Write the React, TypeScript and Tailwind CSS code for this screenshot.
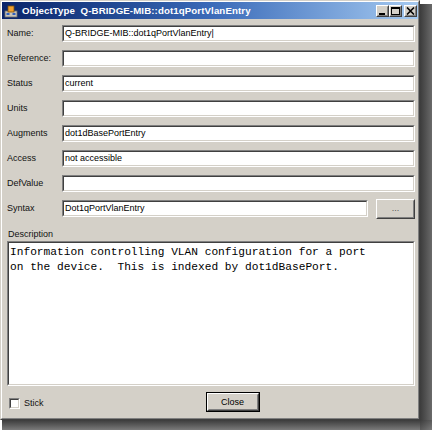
import React from "react";

const sunkenOuter =
  "border border-t-[#808080] border-l-[#808080] border-b-white border-r-white";
const sunkenInner =
  "border border-t-[#404040] border-l-[#404040] border-b-[#d4d0c8] border-r-[#d4d0c8]";
const raisedOuter =
  "border border-t-white border-l-white border-b-[#404040] border-r-[#404040]";
const raisedInner =
  "border border-t-[#d4d0c8] border-l-[#d4d0c8] border-b-[#808080] border-r-[#808080]";

function Field({ value = "" }: { value?: string }) {
  return (
    <div className={`${sunkenOuter} flex-1 h-[17px]`}>
      <div className={`${sunkenInner} h-full bg-white pl-[1px] flex items-center text-[9px] leading-none text-black whitespace-nowrap overflow-hidden`}>
        {value}
      </div>
    </div>
  );
}

function Row({ label, value, children }: { label: string; value?: string; children?: React.ReactNode }) {
  return (
    <div className="flex items-center h-[17px]">
      <div className="w-[55px] text-[9px] leading-none text-[#111]">{label}</div>
      <Field value={value} />
      {children}
    </div>
  );
}

function TitleButton({ kind }: { kind: "min" | "max" | "close" }) {
  return (
    <div className={`${raisedOuter} w-[13px] h-[12px] bg-[#d4d0c8]`}>
      <div className={`${raisedInner} w-full h-full flex items-center justify-center`}>
        <svg width="9" height="8" viewBox="0 0 9 8">
          {kind === "min" && <rect x="1" y="6" width="6" height="2" fill="#000" />}
          {kind === "max" && (
            <>
              <rect x="0.5" y="0.5" width="8" height="7" fill="none" stroke="#000" />
              <rect x="0" y="0" width="9" height="2" fill="#000" />
            </>
          )}
          {kind === "close" && (
            <path d="M1 0.5 L8 7.5 M8 0.5 L1 7.5" stroke="#000" strokeWidth="1.6" />
          )}
        </svg>
      </div>
    </div>
  );
}

export default function App() {
  return (
    <div className="w-[432px] h-[430px] bg-white grid grid-cols-[420px_12px] grid-rows-[420px_10px] font-['Liberation_Sans',Arial,sans-serif]">
      {/* window */}
      <div className="border border-t-[#d4d0c8] border-l-[#d4d0c8] border-b-[#404040] border-r-[#404040]">
        <div className="h-full border border-t-white border-l-white border-b-[#808080] border-r-[#808080] bg-[#d4d0c8] flex flex-col">
          {/* title bar */}
          <div className="h-[17px] bg-gradient-to-r from-[#0a246a] via-[#3a6ab8] to-[#a6caf0] flex items-center pl-[2px] pr-[1px]">
            <svg width="14" height="14" viewBox="0 0 14 14" className="shrink-0">
              <rect x="1" y="7" width="12" height="6" fill="#c9c4b8" stroke="#6b6b6b" strokeWidth="0.8" />
              <rect x="4" y="2" width="6" height="6" fill="#f0a030" stroke="#7a5010" strokeWidth="0.8" />
              <rect x="2.5" y="9" width="3" height="2" fill="#3060c0" />
              <rect x="8.5" y="9" width="3" height="2" fill="#3060c0" />
            </svg>
            <div className="ml-[4px] text-white font-bold text-[9.7px] leading-none whitespace-nowrap tracking-[0.1px]">
              ObjectType&nbsp;&nbsp;Q-BRIDGE-MIB::dot1qPortVlanEntry
            </div>
            <div className="ml-auto flex items-center">
              <TitleButton kind="min" />
              <TitleButton kind="max" />
              <div className="ml-[2px]">
                <TitleButton kind="close" />
              </div>
            </div>
          </div>

          {/* body */}
          <div className="flex-1 flex flex-col pl-[5px] pr-[3px] pt-[6px]">
            <div className="flex flex-col gap-[8px]">
              <Row label="Name:" value="Q-BRIDGE-MIB::dot1qPortVlanEntry|" />
              <Row label="Reference:" />
              <Row label="Status" value="current" />
              <Row label="Units" />
              <Row label="Augments" value="dot1dBasePortEntry" />
              <Row label="Access" value="not accessible" />
              <Row label="DefValue" />
              <Row label="Syntax" value="Dot1qPortVlanEntry">
                <div className="w-[8px]" />
                <div className={`${raisedOuter} w-[39px] h-[20px] bg-[#d4d0c8]`}>
                  <div className={`${raisedInner} w-full h-full flex items-center justify-center text-[9px] leading-none text-[#555]`}>
                    ...
                  </div>
                </div>
              </Row>
            </div>

            <div className="mt-[11px] text-[9px] leading-[12px] text-[#111] pl-[1px]">Description</div>

            <div className={`${sunkenOuter} mt-[1px] h-[145px]`}>
              <div className={`${sunkenInner} h-full bg-white pl-[1px] pt-[2px] font-['Liberation_Mono','Courier_New',monospace] text-[11.2px] leading-[15px] text-black whitespace-pre`}>
                {"Information controlling VLAN configuration for a port\non the device.  This is indexed by dot1dBasePort."}
              </div>
            </div>

            <div className="flex-1 flex items-center">
              <div className="flex items-center ml-[2px] mt-[2px]">
                <div className={`${sunkenOuter} w-[11px] h-[11px]`}>
                  <div className={`${sunkenInner} w-full h-full bg-white`} />
                </div>
                <div className="ml-[4px] text-[9px] leading-none text-[#111]">Stick</div>
              </div>
              <div className="ml-[162px] border border-black">
                <div className={`${raisedOuter} w-[52px] h-[18px] bg-[#d4d0c8]`}>
                  <div className={`${raisedInner} w-full h-full flex items-center justify-center text-[9px] leading-none text-black`}>
                    Close
                  </div>
                </div>
              </div>
            </div>
          </div>
        </div>
      </div>

      {/* right shadow */}
      <div className="pt-[4px] bg-white">
        <div className="h-full bg-gradient-to-r from-[#3c3c3c] to-[#6a6a6a]" />
      </div>
      {/* bottom shadow */}
      <div className="pl-[2px] bg-white">
        <div className="h-full bg-gradient-to-b from-[#3c3c3c] to-[#7a7a7a]" />
      </div>
      <div className="bg-gradient-to-br from-[#3c3c3c] to-[#7a7a7a]" />
    </div>
  );
}
